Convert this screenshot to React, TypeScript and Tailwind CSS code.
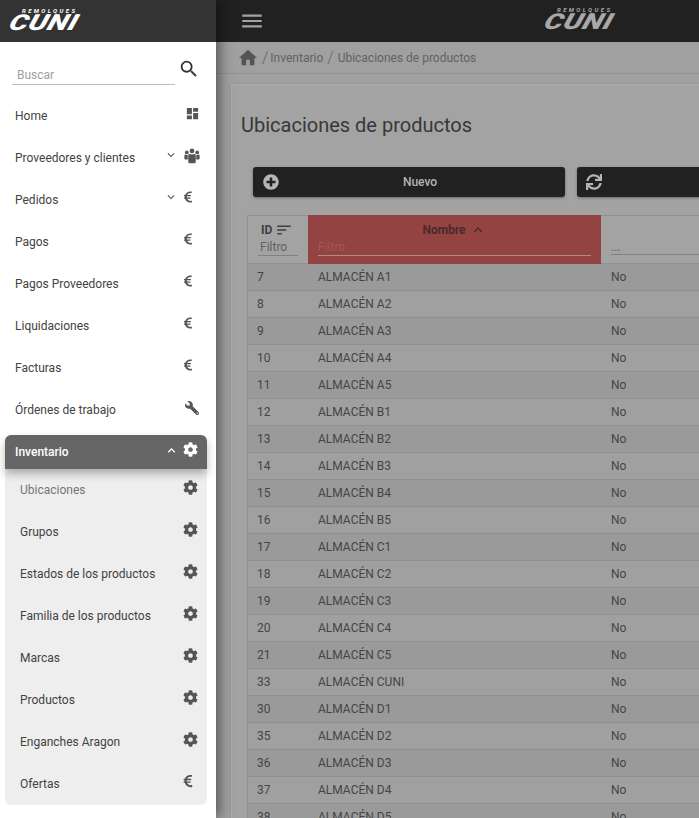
import { FaCog, FaEuroSign, FaPlusCircle, FaSync, FaWrench } from "react-icons/fa";
import { MdDashboard, MdHome, MdKeyboardArrowDown, MdKeyboardArrowUp, MdMenu, MdSearch, MdSort } from "react-icons/md";

const font = { fontFamily: "Roboto, sans-serif" };

function Logo({ color }: { color: string }) {
  return (
    <div className="flex w-[72px] flex-col leading-none" style={{ color }}>
      <span className="ml-[12px] text-[6px] font-bold italic leading-[7px] tracking-[2.4px]">REMOLQUES</span>
      <span className="origin-left -skew-x-[14deg] scale-x-[1.32] text-[22px] font-black italic leading-[17px] tracking-[0.5px]">CUNI</span>
    </div>
  );
}

function UsersIcon() {
  return (
    <svg width="17" height="16" viewBox="0 0 17 16" fill="currentColor">
      <circle cx="3" cy="4.2" r="2" />
      <circle cx="14" cy="4.2" r="2" />
      <circle cx="8.5" cy="2.6" r="2.5" />
      <path d="M0.4 7.4C0.4 6.7 1 6.3 1.6 6.6C2.6 7.1 3.4 7.1 4 6.8L4 11.6L1.4 11.6C0.8 11.6 0.4 11.2 0.4 10.6Z" />
      <path d="M16.6 7.4C16.6 6.7 16 6.3 15.4 6.6C14.4 7.1 13.6 7.1 13 6.8L13 11.6L15.6 11.6C16.2 11.6 16.6 11.2 16.6 10.6Z" />
      <path d="M4.5 7.5C4.5 6.3 5.4 5.6 6.2 6C7.6 6.6 9.4 6.6 10.8 6C11.6 5.6 12.5 6.3 12.5 7.5L12.5 14C12.5 15 11.8 15.6 10.9 15.6L6.1 15.6C5.2 15.6 4.5 15 4.5 14Z" />
    </svg>
  );
}

function NavItem({ label, icon, chevron, lift = 5 }: { label: string; icon: React.ReactNode; chevron?: boolean; lift?: number }) {
  return (
    <div className="flex h-[42px] items-center pl-[15px] text-[12px] text-[#424242]">
      <span className="flex-1">{label}</span>
      {chevron && <MdKeyboardArrowDown className="mb-[6px] mr-[6px] text-[14px] text-[#555]" />}
      <span className={`mr-[16px] flex w-[16px] justify-center text-[#555] ${lift === 6 ? "mb-[6px]" : "mb-[5px]"}`}>{icon}</span>
    </div>
  );
}

function SubItem({ label, icon, muted }: { label: string; icon: React.ReactNode; muted?: boolean }) {
  return (
    <div className={`flex h-[42px] items-center pl-[15px] text-[12px] ${muted ? "text-[#757575]" : "text-[#424242]"}`}>
      <span className="flex-1">{label}</span>
      <span className="mb-[6px] flex w-[34px] justify-center text-[#555]">{icon}</span>
    </div>
  );
}

const navEuro = <FaEuroSign className="mr-[8px] text-[14px]" />;
const subEuro = <FaEuroSign className="mr-[4px] text-[14px]" />;
const cog = <FaCog className="text-[15px]" />;

const rows: [number, string][] = [
  [7, "ALMACÉN A1"], [8, "ALMACÉN A2"], [9, "ALMACÉN A3"], [10, "ALMACÉN A4"], [11, "ALMACÉN A5"],
  [12, "ALMACÉN B1"], [13, "ALMACÉN B2"], [14, "ALMACÉN B3"], [15, "ALMACÉN B4"], [16, "ALMACÉN B5"],
  [17, "ALMACÉN C1"], [18, "ALMACÉN C2"], [19, "ALMACÉN C3"], [20, "ALMACÉN C4"], [21, "ALMACÉN C5"],
  [33, "ALMACÉN CUNI"], [30, "ALMACÉN D1"], [35, "ALMACÉN D2"], [36, "ALMACÉN D3"], [37, "ALMACÉN D4"], [38, "ALMACÉN D5"],
];

export default function App() {
  return (
    <div className="flex h-[818px] w-[699px] overflow-hidden bg-[#a1a1a1]" style={font}>
      <aside className="relative z-10 flex w-[216px] shrink-0 flex-col bg-white shadow-[3px_0_13px_rgba(0,0,0,0.5)]">
        <div className="flex h-[42px] justify-start bg-[#333333] pl-[10px] pt-[7px]">
          <Logo color="#ffffff" />
        </div>
        <div className="flex h-[53px] items-start pl-[12px] pr-[16px] pt-[18px]">
          <div className="h-[25px] w-[164px] border-b border-[#bdbdbd] pl-[5px] pt-[8px] text-[12px] leading-[14px] text-[#a0a0a0]">Buscar</div>
          <MdSearch className="-mt-[2px] ml-[3px] text-[22px] text-[#333]" />
        </div>
        <NavItem label="Home" icon={<MdDashboard className="text-[15px]" />} />
        <NavItem label="Proveedores y clientes" chevron icon={<UsersIcon />} />
        <NavItem label="Pedidos" chevron lift={6} icon={navEuro} />
        <NavItem label="Pagos" lift={6} icon={navEuro} />
        <NavItem label="Pagos Proveedores" lift={6} icon={navEuro} />
        <NavItem label="Liquidaciones" lift={6} icon={navEuro} />
        <NavItem label="Facturas" lift={6} icon={navEuro} />
        <NavItem label="Órdenes de trabajo" icon={<FaWrench className="-scale-x-100 text-[14px]" />} />
        <div className="mx-[5px] mt-[4px] w-[202px]">
          <div className="relative z-10 flex h-[34px] items-center rounded-t-[6px] bg-[#666666] pl-[10px] text-[12px] font-medium text-white shadow-[0_5px_8px_rgba(0,0,0,0.28)]">
            <span className="flex-1">Inventario</span>
            <MdKeyboardArrowUp className="-mr-[6px] mb-[4px] text-[15px]" />
            <span className="mb-[5px] flex w-[34px] justify-center"><FaCog className="text-[15px]" /></span>
          </div>
          <div className="rounded-b-[6px] bg-[#eeeeee]">
            <SubItem label="Ubicaciones" muted icon={cog} />
            <SubItem label="Grupos" icon={cog} />
            <SubItem label="Estados de los productos" icon={cog} />
            <SubItem label="Familia de los productos" icon={cog} />
            <SubItem label="Marcas" icon={cog} />
            <SubItem label="Productos" icon={cog} />
            <SubItem label="Enganches Aragon" icon={cog} />
            <SubItem label="Ofertas" icon={subEuro} />
          </div>
        </div>
      </aside>

      <main className="flex min-w-0 flex-1 flex-col">
        <header className="flex h-[42px] shrink-0 bg-[#212121] pl-[24px]">
          <MdMenu className="-ml-[1px] mt-[8px] text-[26px] text-[#a3a3a3]" />
          <div className="ml-[280px] pt-[6px]"><Logo color="#a8a8a8" /></div>
        </header>
        <nav className="flex h-[32px] shrink-0 items-center border-b border-[#929292] bg-[#a0a0a0] pl-[21px] text-[12px] text-[#626262]">
          <MdHome className="text-[22px] text-[#545454]" />
          <span className="ml-[3px] text-[16px] font-light">/</span>
          <span className="ml-[2px]">Inventario</span>
          <span className="ml-[4px] text-[16px] font-light">/</span>
          <span className="ml-[4px]">Ubicaciones de productos</span>
        </nav>
        <div className="ml-[15px] mt-[10px] flex-1 rounded-tl-[2px] border-l border-t border-[#adadad] bg-[#a3a3a3] shadow-[0_0_3px_rgba(0,0,0,0.15)]">
          <h1 className="ml-[9px] mt-[27px] text-[20px] leading-[26px] text-[#383838]">Ubicaciones de productos</h1>
          <div className="ml-[21px] mt-[29px] flex w-[600px] gap-[12px]">
            <button className="flex h-[30px] w-[312px] shrink-0 items-center rounded-[3px] bg-[#212121] pl-[10px] text-[12px] font-medium text-[#b5b5b5] shadow-[0_1px_3px_rgba(0,0,0,0.35)]">
              <FaPlusCircle className="text-[16px] text-[#b5b5b5]" />
              <span className="flex-1 pr-[4px] text-center">Nuevo</span>
            </button>
            <button className="flex h-[30px] w-[200px] shrink-0 items-center rounded-[3px] bg-[#212121] pl-[9px] text-[#b5b5b5] shadow-[0_1px_3px_rgba(0,0,0,0.35)]">
              <FaSync className="text-[16px]" />
            </button>
          </div>
          <div className="ml-[15px] mt-[18px] w-[600px] border-l border-[#8f8f8f]">
            <div className="flex h-[49px] border-y border-[#8f8f8f]">
              <div className="flex w-[60px] shrink-0 flex-col pl-[10px] pt-[7px]">
                <div className="flex h-[14px] items-center pl-[3px] text-[12px] font-bold leading-[14px] text-[#3f3f3f]">ID<MdSort className="ml-[3px] text-[18px]" /></div>
                <div className="mt-[2px] h-[17px] w-[40px] border-b border-[#808080] pl-[2px] text-[12px] leading-[16px] text-[#616161]">Filtro</div>
              </div>
              <div className="-mt-[1px] h-[49px] w-[293px] shrink-0 bg-[#944343] px-[10px] pt-[8px]">
                <div className="flex h-[14px] items-center justify-center text-[12px] font-bold leading-[14px] text-[#4a2a2a]">
                  Nombre<MdKeyboardArrowUp className="ml-[3px] text-[18px]" />
                </div>
                <div className="mt-[2px] h-[17px] w-[273px] border-b border-[#b38a8a] text-[12px] leading-[16px] text-[#a35656]">Filtro</div>
              </div>
              <div className="flex-1 pl-[10px] pt-[26px]">
                <div className="h-[13px] w-[90px] border-b border-[#808080] text-[12px] leading-[11px] text-[#616161]">...</div>
              </div>
            </div>
            {rows.map(([id, name], i) => (
              <div key={id} className={`flex h-[27px] shrink-0 items-center border-b border-[#8f8f8f] text-[12px] text-[#454545] ${i % 2 === 0 ? "bg-[#9a9a9a]" : "bg-[#a0a0a0]"}`}>
                <span className="w-[60px] shrink-0 pl-[9px]">{id}</span>
                <span className="w-[293px] shrink-0 pl-[10px]">{name}</span>
                <span className="pl-[10px]">No</span>
              </div>
            ))}
          </div>
        </div>
      </main>
    </div>
  );
}
